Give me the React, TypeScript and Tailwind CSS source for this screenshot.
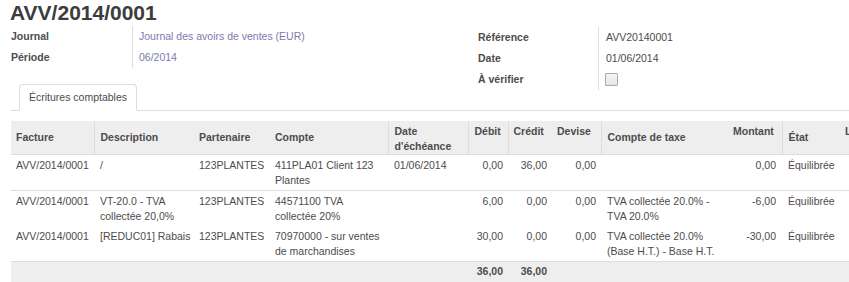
import { Fragment } from "react";

const rows = [
  {
    facture: "AVV/2014/0001",
    description: "/",
    partenaire: "123PLANTES",
    compte: "411PLA01 Client 123 Plantes",
    echeance: "01/06/2014",
    debit: "0,00",
    credit: "36,00",
    devise: "0,00",
    taxe: "",
    montant: "0,00",
    etat: "Équilibrée",
    border: true,
  },
  {
    facture: "AVV/2014/0001",
    description: "VT-20.0 - TVA collectée 20,0%",
    partenaire: "123PLANTES",
    compte: "44571100 TVA collectée 20%",
    echeance: "",
    debit: "6,00",
    credit: "0,00",
    devise: "0,00",
    taxe: "TVA collectée 20.0% - TVA 20.0%",
    montant: "-6,00",
    etat: "Équilibrée",
    border: false,
  },
  {
    facture: "AVV/2014/0001",
    description: "[REDUC01] Rabais",
    partenaire: "123PLANTES",
    compte: "70970000 - sur ventes de marchandises",
    echeance: "",
    debit: "30,00",
    credit: "0,00",
    devise: "0,00",
    taxe: "TVA collectée 20.0% (Base H.T.) - Base H.T.",
    montant: "-30,00",
    etat: "Équilibrée",
    border: true,
  },
];

const widths = [83, 99, 76, 119, 80, 40, 43, 50, 126, 55, 57, 60];

export default function App() {
  return (
    <div className="w-[849px] h-[282px] overflow-hidden bg-white text-[#4c4c4c] text-[10.5px] leading-[15px] font-['Liberation_Sans',Arial,sans-serif]">
      {/* Title */}
      <h1 className="pl-[10px] pt-[2px] text-[21px] leading-[22px] font-bold text-[#3c3c3c]">
        AVV/2014/0001
      </h1>

      {/* Fields */}
      <div className="flex pl-[11px] mt-[2px]">
        <div className="w-[467px] grid grid-cols-[121px_1fr] self-start">
          <div className="h-[21px] flex items-center font-bold">Journal</div>
          <div className="h-[21px] flex items-center border-l border-[#dddddd] pl-[6px] text-[#7c7bad]">
            Journal des avoirs de ventes (EUR)
          </div>
          <div className="h-[21px] flex items-center font-bold">Période</div>
          <div className="h-[21px] flex items-center border-l border-[#dddddd] pl-[6px] text-[#7c7bad]">
            06/2014
          </div>
        </div>
        <div className="grid grid-cols-[120px_1fr] mt-[1px]">
          <div className="h-[21px] flex items-center font-bold">Référence</div>
          <div className="h-[21px] flex items-center border-l border-[#dddddd] pl-[7px]">AVV20140001</div>
          <div className="h-[21px] flex items-center font-bold">Date</div>
          <div className="h-[21px] flex items-center border-l border-[#dddddd] pl-[7px]">01/06/2014</div>
          <div className="h-[21px] flex items-center font-bold">À vérifier</div>
          <div className="h-[21px] flex items-center border-l border-[#dddddd] pl-[6px]">
            <span className="w-[13px] h-[13px] border border-[#aaaaaa] bg-gradient-to-b from-[#f4f4f4] to-[#e6e6e6] rounded-[1px]" />
          </div>
        </div>
      </div>

      {/* Notebook */}
      <div className="ml-[11px] -mt-[6px] border-b border-[#dddddd] flex">
        <div className="ml-[8px] -mb-px w-[118px] h-[27px] border border-b-white border-[#dddddd] rounded-t-[4px] bg-white flex items-center justify-center">
          Écritures comptables
        </div>
      </div>

      {/* Lines */}
      <div className="pl-[11px] pt-[10px] overflow-hidden">
        <table className="table-fixed border-collapse w-[888px] text-left">
          <colgroup>
            {widths.map((w, i) => (
              <col key={i} style={{ width: w }} />
            ))}
          </colgroup>
          <thead>
            <tr className="bg-[#eeeeee] h-[33px] font-bold border-b border-[#dddddd]">
              <th className="pl-[5px] align-middle border-r border-[#dddddd]">Facture</th>
              <th className="pl-[6px] align-middle">Description</th>
              <th className="pl-[6px] align-middle">Partenaire</th>
              <th className="pl-[6px] align-middle border-r border-[#dddddd]">Compte</th>
              <th className="pl-[6px] pt-[3px] align-top border-r border-[#dddddd]">
                Date<br />d'échéance
              </th>
              <th className="pl-[6px] pt-[3px] align-top border-r border-[#dddddd]">Débit</th>
              <th className="pl-[5px] pt-[3px] align-top">Crédit</th>
              <th className="pl-[6px] pt-[3px] align-top border-r border-[#dddddd]">Devise</th>
              <th className="pl-[6px] align-middle">Compte de taxe</th>
              <th className="pl-[6px] pt-[3px] align-top border-r border-[#dddddd]">Montant</th>
              <th className="pl-[6px] align-middle">État</th>
              <th className="pl-[6px] pt-[3px] align-top">L</th>
            </tr>
          </thead>
          <tbody>
            {rows.map((r, i) => (
              <Fragment key={i}>
                <tr className={r.border ? "border-b border-[#dddddd] align-top" : "align-top"}>
                  <td className="pl-[5px] pt-[3px] pb-[2px]">{r.facture}</td>
                  <td className="pl-[6px] pt-[3px] pb-[2px]">{r.description}</td>
                  <td className="pl-[6px] pt-[3px] pb-[2px]">{r.partenaire}</td>
                  <td className="pl-[6px] pr-[6px] pt-[3px] pb-[2px]">{r.compte}</td>
                  <td className="pl-[6px] pt-[3px] pb-[2px]">{r.echeance}</td>
                  <td className="pr-[5px] pt-[3px] pb-[2px] text-right">{r.debit}</td>
                  <td className="pr-[4px] pt-[3px] pb-[2px] text-right">{r.credit}</td>
                  <td className="pr-[5px] pt-[3px] pb-[2px] text-right">{r.devise}</td>
                  <td className="pl-[6px] pr-[4px] pt-[3px] pb-[2px]">{r.taxe}</td>
                  <td className="pr-[6px] pt-[3px] pb-[2px] text-right">{r.montant}</td>
                  <td className="pl-[6px] pt-[3px] pb-[2px]">{r.etat}</td>
                  <td />
                </tr>
              </Fragment>
            ))}
          </tbody>
          <tfoot>
            <tr className="bg-[#eeeeee] font-bold h-[24px] align-top">
              <td colSpan={5} />
              <td className="pr-[5px] pt-[2px] text-right">36,00</td>
              <td className="pr-[4px] pt-[2px] text-right">36,00</td>
              <td colSpan={5} />
            </tr>
          </tfoot>
        </table>
      </div>
    </div>
  );
}
